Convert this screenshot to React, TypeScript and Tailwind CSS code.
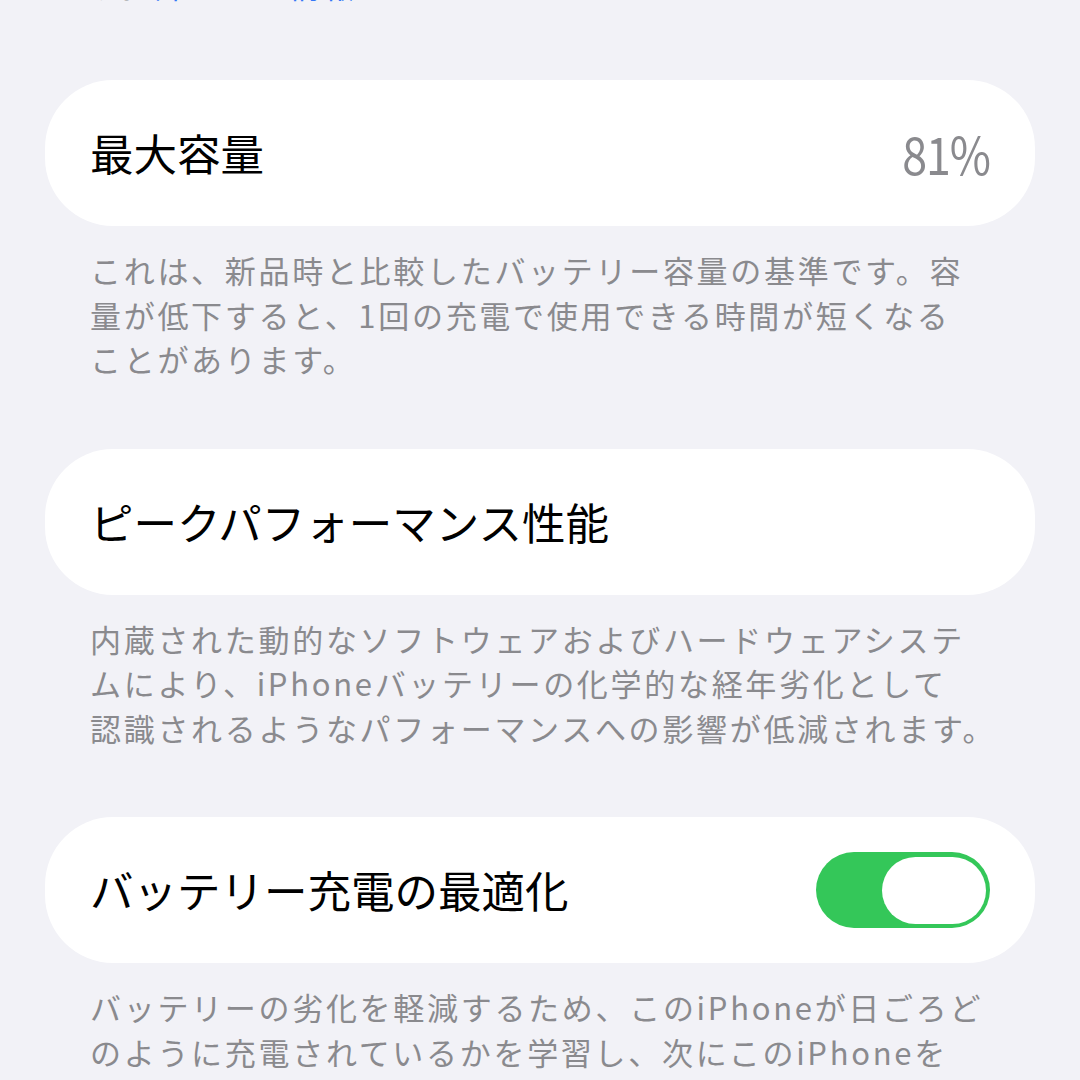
import React from 'react';

const FONT = '"Noto Sans CJK JP", "Noto Sans", sans-serif';

const SECTIONS = [
  {
    title: '最大容量',
    value: '81%',
    lines: [
      'これは、新品時と比較したバッテリー容量の基準です。容',
      '量が低下すると、1回の充電で使用できる時間が短くなる',
      'ことがあります。',
    ],
  },
  {
    title: 'ピークパフォーマンス性能',
    lines: [
      '内蔵された動的なソフトウェアおよびハードウェアシステ',
      'ムにより、iPhoneバッテリーの化学的な経年劣化として',
      '認識されるようなパフォーマンスへの影響が低減されます。',
    ],
  },
  {
    title: 'バッテリー充電の最適化',
    toggle: true,
    lines: [
      'バッテリーの劣化を軽減するため、このiPhoneが日ごろど',
      'のように充電されているかを学習し、次にこのiPhoneを',
      '長時間充電したままにしたときに役立ちます。',
    ],
  },
];

function Toggle() {
  return (
    <div className="w-[174px] h-[76px] rounded-full bg-[#34c759] flex items-center justify-end pr-[4px]">
      <div className="w-[104px] h-[67px] rounded-full bg-white" />
    </div>
  );
}

export default function App() {
  return (
    <div
      className="w-[1080px] h-[1080px] overflow-hidden bg-[#f2f2f7] px-[45px]"
      style={{ fontFamily: FONT }}
    >
      {/* tail of the previous section, cut off by the top edge */}
      <p className="-mt-[38px] h-[45px] pl-[45px] text-[31px] leading-[45px] tracking-[2.7px] text-[#8a8a8e] whitespace-nowrap">
        す。<span className="text-[#3478f6]">詳しい</span>　<span className="text-[#3478f6]">情報</span>
      </p>

      <div className="flex flex-col mt-[73px]">
        {SECTIONS.map((s, i) => (
          <section key={s.title} className={i === 0 ? '' : 'mt-[67px]'}>
            <div className="h-[146px] rounded-[68px] bg-white px-[45px] flex items-center justify-between">
              <span className="text-[43.5px] leading-none text-black whitespace-nowrap">{s.title}</span>
              {s.value && (
                <span className="text-[52px] leading-none text-[#8a8a8e] scale-x-[0.86] origin-right tracking-tight">
                  {s.value}
                </span>
              )}
              {s.toggle && <Toggle />}
            </div>
            <div className="mt-[22px] pl-[45px] text-[31px] leading-[44.5px] tracking-[2.7px] text-[#8a8a8e]">
              {s.lines.map((l) => (
                <div key={l} className="whitespace-nowrap">
                  {l}
                </div>
              ))}
            </div>
          </section>
        ))}
      </div>
    </div>
  );
}
